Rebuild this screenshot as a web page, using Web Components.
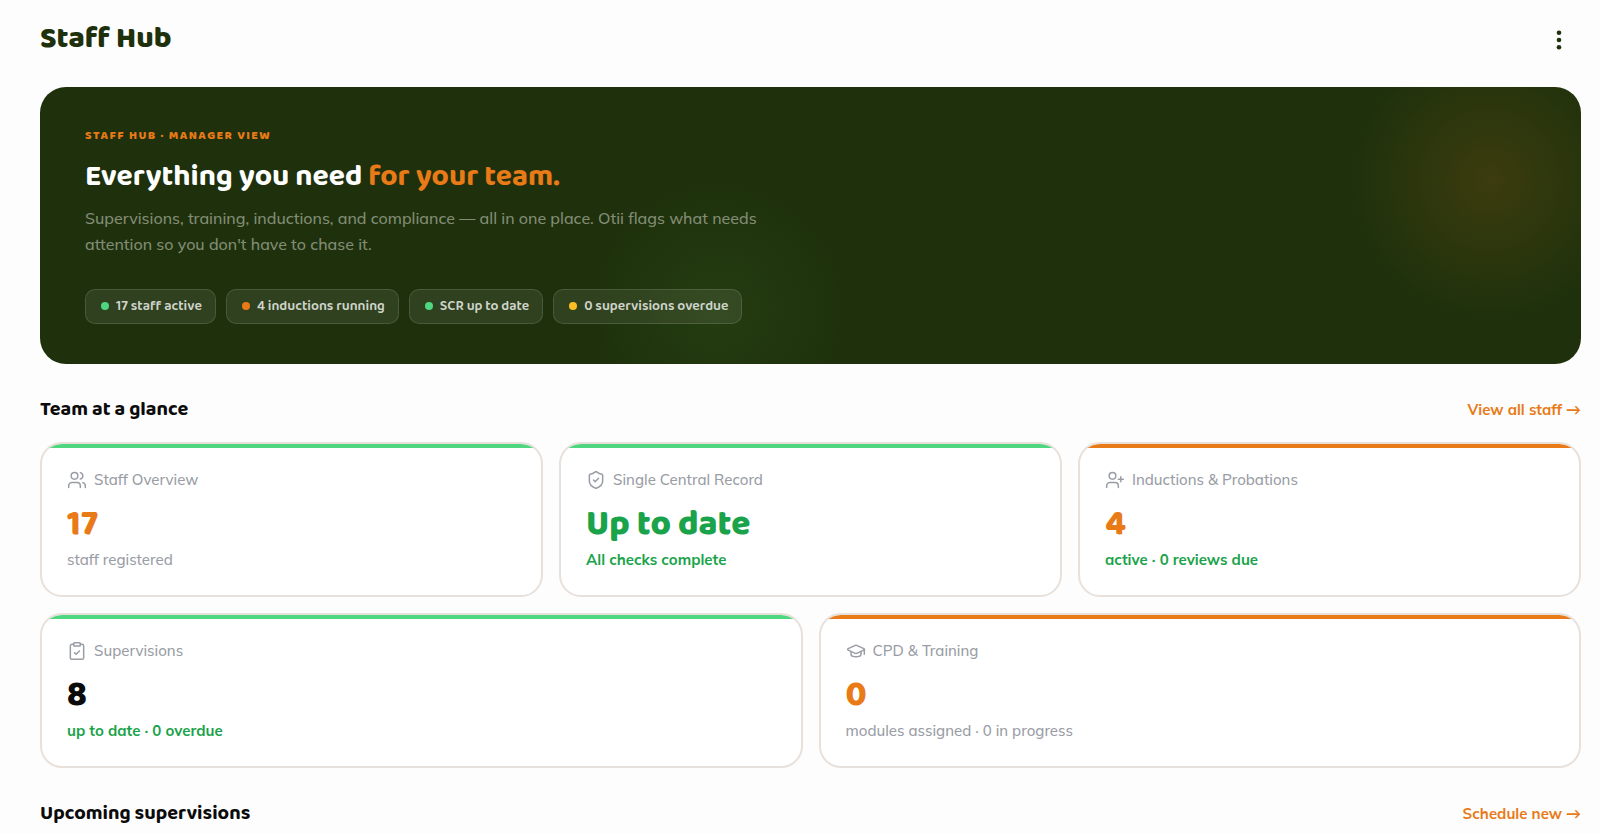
<!DOCTYPE html>
<html lang="en">
<head>
<meta charset="utf-8">
<meta name="viewport" content="width=device-width, initial-scale=1">
<title>Staff Hub</title>
<style>
:root{--orange:#e87a17;--green:#1aa34a;--mint:#4fd680;--amber:#fbbf24;--forest:#1e310c;--muted:#9a9da5;--line:#e8e0da;--display:"Baloo 2",Lato,sans-serif}
body{margin:0;background:#fdfdfd;color:#0b0b0b;font-family:Mulish,Lato,sans-serif}
</style>
</head>
<body>
<staff-page>
  <page-header>Staff Hub</page-header>
  <hero-banner>
    <span slot="eyebrow">STAFF HUB · MANAGER VIEW</span>
    <span slot="title">Everything you need </span>
    <span slot="accent">for your team.</span>
    <span slot="text">Supervisions, training, inductions, and compliance — all in one place. Otii flags what needs attention so you don't have to chase it.</span>
    <status-chip tone="mint">17 staff active</status-chip>
    <status-chip tone="orange">4 inductions running</status-chip>
    <status-chip tone="mint">SCR up to date</status-chip>
    <status-chip tone="amber">0 supervisions overdue</status-chip>
  </hero-banner>
  <section-head action="View all staff">Team at a glance</section-head>
  <card-grid>
    <stat-card icon="users" bar="mint" tone="orange" value="17" note="staff registered">Staff Overview</stat-card>
    <stat-card icon="shield" bar="mint" tone="green" value="Up to date" note="All checks complete" good>Single Central Record</stat-card>
    <stat-card icon="userplus" bar="orange" tone="orange" value="4" note="active · 0 reviews due" good>Inductions &amp; Probations</stat-card>
    <stat-card class="half" icon="clipboard" bar="mint" value="8" note="up to date · 0 overdue" good>Supervisions</stat-card>
    <stat-card class="half" icon="cap" bar="orange" tone="orange" value="0" note="modules assigned · 0 in progress">CPD &amp; Training</stat-card>
  </card-grid>
  <section-head action="Schedule new">Upcoming supervisions</section-head>
</staff-page>
<script>
const ICONS = {
  users: '<path d="M16 21v-2a4 4 0 0 0-4-4H6a4 4 0 0 0-4 4v2"/><circle cx="9" cy="7" r="4"/><path d="M22 21v-2a4 4 0 0 0-3-3.87"/><path d="M16 3.13a4 4 0 0 1 0 7.75"/>',
  shield: '<path d="M20 13c0 5-3.5 7.5-7.66 8.95a1 1 0 0 1-.67-.01C7.5 20.5 4 18 4 13V6a1 1 0 0 1 1-1c2 0 4.5-1.2 6.24-2.72a1.17 1.17 0 0 1 1.52 0C14.51 3.81 17 5 19 5a1 1 0 0 1 1 1z"/><path d="m9 12 2 2 4-4"/>',
  userplus: '<path d="M16 21v-2a4 4 0 0 0-4-4H6a4 4 0 0 0-4 4v2"/><circle cx="9" cy="7" r="4"/><path d="M19 8v6M22 11h-6"/>',
  clipboard: '<rect x="8" y="2" width="8" height="4" rx="1"/><path d="M16 4h2a2 2 0 0 1 2 2v14a2 2 0 0 1-2 2H6a2 2 0 0 1-2-2V6a2 2 0 0 1 2-2h2"/><path d="m9 14 2 2 4-4"/>',
  cap: '<path d="M21.42 10.922a1 1 0 0 0-.019-1.838L12.83 5.18a2 2 0 0 0-1.66 0L2.6 9.08a1 1 0 0 0 0 1.832l8.57 3.908a2 2 0 0 0 1.66 0z"/><path d="M22 10v6"/><path d="M6 12.5V16a6 3 0 0 0 12 0v-3.5"/>'
};

function define(name, render) {
  customElements.define(name, class extends HTMLElement {
    connectedCallback() {
      if (this.shadowRoot) return;
      const t = document.createElement('template');
      t.innerHTML = render(this);
      this.attachShadow({ mode: 'open' }).append(t.content.cloneNode(true));
    }
  });
}

define('staff-page', () => `
<style>
:host{display:block;padding:18px 19px 0 40px}
</style><main><slot></slot></main>`);

define('page-header', () => `
<style>
:host{display:block;margin-bottom:25px}
header{display:flex;align-items:center;justify-content:space-between}
h1{margin:0;padding-bottom:2px;font:800 30px/42px var(--display);color:var(--forest)}
button{display:grid;place-items:center;width:44px;height:44px;padding:0;border:0;background:none;color:var(--forest);cursor:pointer}
</style>
<header><h1><slot></slot></h1>
<button type="button" aria-label="More options"><svg width="24" height="24" viewBox="0 0 24 24" fill="currentColor"><circle cx="12" cy="4.7" r="2.3"/><circle cx="12" cy="12" r="2.3"/><circle cx="12" cy="19.3" r="2.3"/></svg></button></header>`);

define('hero-banner', () => `
<style>
:host{display:block;padding:41px 45px 40px;border-radius:26px;color:#fff;
background:radial-gradient(circle 140px at calc(100% - 91px) 93px,rgba(232,122,23,.15),transparent),
radial-gradient(circle 126px at 44% 222px,rgba(90,160,60,.1),transparent),var(--forest)}
.eyebrow{margin:0 0 14px;font:800 12px/16px var(--display);letter-spacing:.12em;color:var(--orange)}
h2{margin:0 0 9px;font:700 30px/38px var(--display)}
.accent{color:var(--orange)}
.text{margin:0 0 32px;max-width:700px;font-size:16px;line-height:26px;font-weight:500;color:#828c75}
.chips{display:flex;flex-wrap:wrap;gap:10px}
</style>
<p class="eyebrow"><slot name="eyebrow"></slot></p>
<h2><slot name="title"></slot><span class="accent"><slot name="accent"></slot></span></h2>
<p class="text"><slot name="text"></slot></p>
<div class="chips"><slot></slot></div>`);

define('status-chip', el => `
<style>
:host{display:inline-flex;align-items:center;gap:7px;padding:0 13px 2px 15px;height:31px;border:1px solid rgba(255,255,255,.13);border-radius:10px;background:rgba(255,255,255,.08);font:600 14px/24px var(--display);color:#cfd4ca}
i{width:8px;height:8px;border-radius:50%;background:var(--${el.getAttribute('tone')})}
</style><i></i><span><slot></slot></span>`);

define('section-head', el => `
<style>
:host{display:flex;align-items:center;justify-content:space-between;margin:29px 0 17px}
h2{margin:0;font:700 20px/32px var(--display)}
a{display:flex;align-items:center;gap:4px;padding-top:2px;font-size:15px;line-height:30px;font-weight:700;color:var(--orange);text-decoration:none}
</style><h2><slot></slot></h2><a href="#"><span>${el.getAttribute('action')}</span><span>→</span></a>`);

define('card-grid', () => `
<style>
:host{display:grid;grid-template-columns:repeat(6,1fr);gap:16px}
::slotted(*){grid-column:span 2}
::slotted(.half){grid-column:span 3}
</style><slot></slot>`);

define('stat-card', el => `
<style>
:host{display:block;box-sizing:border-box;border:2px solid var(--line);border-radius:22px;background:#fff;overflow:hidden}
article{padding:20px 25px 23px;border-top:4px solid var(--${el.getAttribute('bar')})}
h3{display:flex;align-items:center;gap:7px;margin:0 0 12px;font-size:15px;line-height:24px;font-weight:500;color:var(--muted)}
svg{width:20px;height:20px;fill:none;stroke:currentColor;stroke-width:1.8;stroke-linecap:round;stroke-linejoin:round}
p{margin:0}
.value{margin-bottom:4px;font:800 35px/40px var(--display);color:${el.hasAttribute('tone') ? `var(--${el.getAttribute('tone')})` : 'inherit'}}
.note{font-size:15px;line-height:24px;${el.hasAttribute('good') ? 'font-weight:700;color:var(--green)' : 'font-weight:500;color:var(--muted)'}}
</style>
<article><h3><svg viewBox="0 0 24 24" aria-hidden="true">${ICONS[el.getAttribute('icon')]}</svg><span><slot></slot></span></h3>
<p class="value">${el.getAttribute('value')}</p><p class="note">${el.getAttribute('note')}</p></article>`);
</script>
</body>
</html>
